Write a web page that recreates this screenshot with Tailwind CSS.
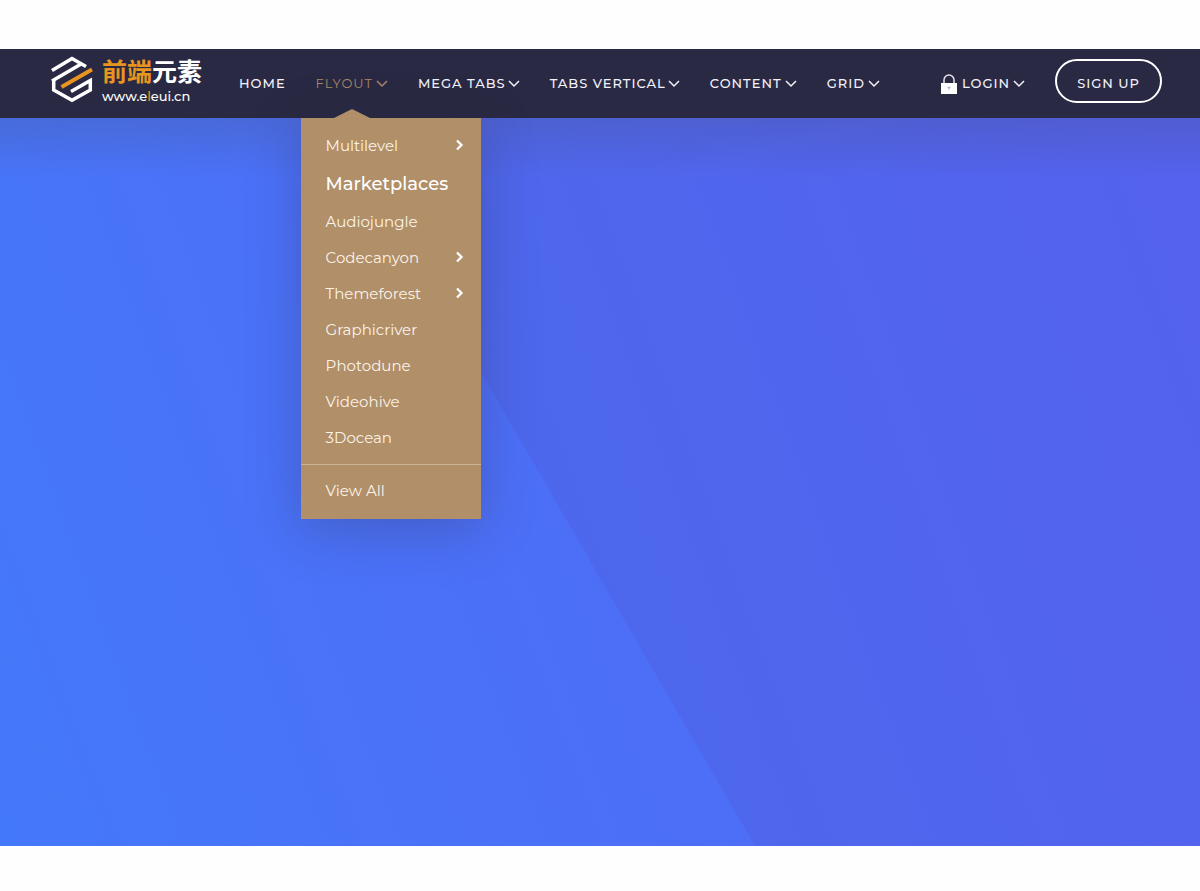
<!DOCTYPE html>
<html lang="en">
<head>
<meta charset="utf-8">
<title>前端元素</title>
<meta name="viewport" content="width=device-width, initial-scale=1">
<script src="https://cdn.jsdelivr.net/npm/@tailwindcss/browser@4"></script>
</head>
<body class="flex min-h-screen flex-col bg-[#fefefe] pt-[49px] pb-[45px] font-['Montserrat','Inter',sans-serif] text-white">
<svg class="hidden">
  <symbol id="down" viewBox="0 0 12 8"><path d="M1 1l5 5 5-5" fill="none" stroke="currentColor" stroke-width="1.5"/></symbol>
  <symbol id="next" viewBox="0 0 9 12"><path d="M2 1.500l4.500 4.500-4.500 4.500" fill="none" stroke="currentColor" stroke-width="2.300"/></symbol>
</svg>
<header class="relative z-10 flex h-[69px] justify-between bg-[#292943] pr-[38px] pl-[51px] text-[13px] font-medium tracking-[1px] text-[#f3f1fa]">
  <div class="pointer-events-none absolute inset-x-0 top-full h-[60px] bg-linear-to-b from-[#46465f]/20 to-transparent"></div>
  <div class="flex">
    <a href="#" class="mt-[6px] mr-[22px] flex w-[151px] items-start gap-[9px] tracking-normal">
      <svg class="h-[48px] w-[42px] shrink-0" viewBox="0 0 42 48" fill="none">
        <g stroke="#fff" stroke-width="3.500">
          <path d="M1 15.500L21 3.500 35 11.500"/>
          <path d="M1 26L31 8.500"/>
          <path d="M2.700 24V35L21 45.200 39.300 35V25.500L20 36.500"/>
        </g>
        <path d="M10.500 32L41 14.500" stroke="#e8951f" stroke-width="3.800"/>
      </svg>
      <span class="flex flex-col">
        <span class="h-[33px] text-[25px] leading-[30px] font-bold whitespace-nowrap font-['Noto_Sans_CJK_SC',sans-serif]"><span class="text-[#e8951f]">前端</span><span class="text-white">元素</span></span>
        <span class="text-[13px] leading-[16px] font-medium text-white">www.e<span class="text-[#e8951f]">l</span>eui.cn</span>
      </span>
    </a>
    <nav>
      <ul class="flex h-full">
        <li><a href="#" class="flex h-full items-center px-[15px]">HOME</a></li>
        <li class="relative z-10">
          <a href="#" class="flex h-full items-center gap-[3px] px-[15px] font-normal text-[#a98867]">FLYOUT<svg class="h-[8px] w-[12px]"><use href="#down"/></svg></a>
          <div class="absolute top-full left-0 w-[180px] bg-[#b08f69] pt-[10px] pb-[10px] text-[15px] font-normal tracking-normal text-[#fdf3e8] shadow-[0_10px_50px_rgba(50,40,60,0.28)]">
            <svg class="absolute -top-[9px] left-[33px] h-[9px] w-[36px]" viewBox="0 0 36 9"><path d="M0 9L16 1q2-1.500 4 0l16 8z" fill="#b08f69"/></svg>
            <ul>
              <li><a href="#" class="flex h-9 items-center justify-between pr-[17px] pl-[25px]">Multilevel<svg class="mb-[2px] h-[12px] w-[9px] text-white"><use href="#next"/></svg></a></li>
              <li><h2 class="flex h-10 items-center pl-[25px] text-[18px] font-medium text-white">Marketplaces</h2></li>
              <li><a href="#" class="flex h-9 items-center pl-[25px]">Audiojungle</a></li>
              <li><a href="#" class="flex h-9 items-center justify-between pr-[17px] pl-[25px]">Codecanyon<svg class="mb-[2px] h-[12px] w-[9px] text-white"><use href="#next"/></svg></a></li>
              <li><a href="#" class="flex h-9 items-center justify-between pr-[17px] pl-[25px]">Themeforest<svg class="mb-[2px] h-[12px] w-[9px] text-white"><use href="#next"/></svg></a></li>
              <li><a href="#" class="flex h-9 items-center pl-[25px]">Graphicriver</a></li>
              <li><a href="#" class="flex h-9 items-center pl-[25px]">Photodune</a></li>
              <li><a href="#" class="flex h-9 items-center pl-[25px]">Videohive</a></li>
              <li><a href="#" class="flex h-9 items-center pl-[25px]">3Docean</a></li>
              <li class="mt-2 border-t border-[#cbb294] pt-2"><a href="#" class="flex h-9 items-center pl-[25px]">View All</a></li>
            </ul>
          </div>
        </li>
        <li><a href="#" class="flex h-full items-center gap-[2px] px-[15px] whitespace-nowrap">MEGA TABS<svg class="h-[8px] w-[12px]"><use href="#down"/></svg></a></li>
        <li><a href="#" class="flex h-full items-center gap-[2px] px-[15px] whitespace-nowrap">TABS VERTICAL<svg class="h-[8px] w-[12px]"><use href="#down"/></svg></a></li>
        <li><a href="#" class="flex h-full items-center gap-[3px] px-[15px]">CONTENT<svg class="h-[8px] w-[12px]"><use href="#down"/></svg></a></li>
        <li><a href="#" class="flex h-full items-center gap-[3px] px-[15px]">GRID<svg class="h-[8px] w-[12px]"><use href="#down"/></svg></a></li>
      </ul>
    </nav>
  </div>
  <div class="flex items-start gap-[30px]">
    <a href="#" class="flex h-full items-center gap-[3px]">
      <svg class="mr-[2px] h-[20px] w-[16px]" viewBox="0 0 16 20"><path d="M3 10V6a5 5 0 0 1 10 0v4" fill="none" stroke="#e6e3ee" stroke-width="1.500"/><path d="M0 9h16v11H0z" fill="#fff"/><path d="M6.500 13h3L8 15.500z" fill="#b9b5c8" stroke="#b9b5c8" stroke-width=".5"/></svg>
      LOGIN<svg class="h-[8px] w-[12px]"><use href="#down"/></svg>
    </a>
    <button type="button" class="mt-[10px] h-[44px] rounded-full border-2 border-white px-[20px] pt-[5px] tracking-[1px] whitespace-nowrap">SIGN UP</button>
  </div>
</header>
<main class="flex flex-1 bg-linear-[70deg] from-[#4478fa] via-[#4e6df7] via-55% to-[#5664f2]">
  <svg class="w-full" viewBox="0 0 1200 728" preserveAspectRatio="none">
    <defs><linearGradient id="shade" x1="0" y1=".5" x2="1" y2=".2"><stop offset="0" stop-color="#4b69ec"/><stop offset="1" stop-color="#5462ee"/></linearGradient></defs>
    <path d="M334 0L755 728H1200V0z" fill="url(#shade)"/>
  </svg>
</main>
</body>
</html>
